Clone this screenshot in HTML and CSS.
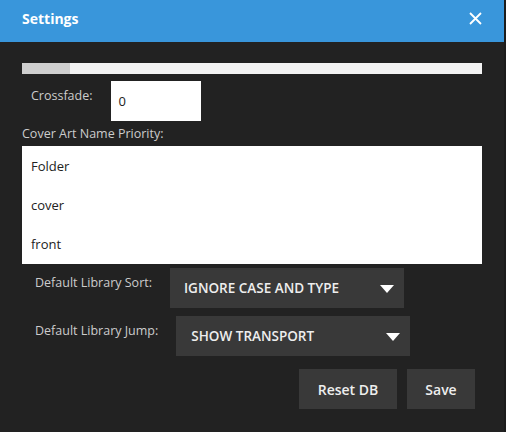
FILE: index.html
```html
<!DOCTYPE html>
<html>
<head>
<meta charset="utf-8">
<link rel="stylesheet" href="styles.css">
</head>
<body>
<div class="dialog">
  <div class="header">
    <span class="title">Settings</span>
    <svg class="close" width="13" height="13" viewBox="0 0 13 13"><path d="M1 1 L12 12 M12 1 L1 12" stroke="#fff" stroke-width="1.8" fill="none"/></svg>
  </div>
  <div class="body">
    <div class="progress"><div class="progress-fill"></div></div>
    <div class="row crossfade">
      <label class="lbl lbl-cross">Crossfade:</label>
      <div class="input">0</div>
    </div>
    <div class="lbl-cover">Cover Art Name Priority:</div>
    <div class="list">
      <div class="item">Folder</div>
      <div class="item">cover</div>
      <div class="item">front</div>
    </div>
    <div class="row sort">
      <label class="lbl lbl-sel">Default Library Sort:</label>
      <div class="select"><span>IGNORE CASE AND TYPE</span><i class="tri"></i></div>
    </div>
    <div class="row jump">
      <label class="lbl lbl-sel">Default Library Jump:</label>
      <div class="select"><span>SHOW TRANSPORT</span><i class="tri"></i></div>
    </div>
    <div class="buttons">
      <button class="btn btn-reset">Reset DB</button>
      <button class="btn btn-save">Save</button>
    </div>
  </div>
</div>
</body>
</html>
```
FILE: styles.css
```css
html, body {
  margin: 0;
  padding: 0;
  height: 100%;
  background: #1c1c1c;
  font-family: "Open Sans", "Liberation Sans", sans-serif;
}
.dialog {
  width: 504px;
  height: 432px;
  background: #222222;
  overflow: hidden;
}
.header {
  height: 42px;
  background: #3996db;
  display: flex;
  align-items: center;
  justify-content: space-between;
  padding: 0 22px;
  box-sizing: border-box;
}
.title {
  color: #fff;
  font-weight: 700;
  font-size: 14px;
  margin-top: -5px;
}
.close {
  margin-top: -6px;
}
.body {
  padding: 0 22px;
}
.progress {
  margin-top: 21px;
  height: 11px;
  background: #f3f3f3;
}
.progress-fill {
  width: 48px;
  height: 100%;
  background: #cfcfcf;
}
.row {
  display: flex;
  align-items: flex-start;
}
.crossfade {
  margin-top: 7px;
}
.lbl {
  color: #cccccc;
  font-size: 12.5px;
  line-height: 16px;
}
.lbl-cross {
  margin-left: 9px;
  margin-right: 18px;
  padding-top: 7px;
}
.input {
  width: 90px;
  height: 40px;
  background: #fff;
  color: #222;
  font-size: 13px;
  line-height: 40px;
  padding-left: 8px;
  box-sizing: border-box;
}
.lbl-cover {
  color: #cccccc;
  font-size: 12.5px;
  line-height: 16px;
  margin-top: 5px;
}
.list {
  margin-top: 4px;
  height: 118px;
  background: #fff;
  display: flex;
  flex-direction: column;
}
.item {
  flex: 1;
  display: flex;
  align-items: center;
  padding-left: 9px;
  color: #222;
  font-size: 13px;
}
.sort {
  margin-top: 4px;
}
.jump {
  margin-top: 8px;
}
.lbl-sel {
  margin-left: 13px;
  margin-right: 18px;
  padding-top: 7px;
}
.select {
  width: 234px;
  height: 40px;
  background: #393939;
  color: #eeeeee;
  font-size: 13.5px;
  font-weight: 600;
  display: flex;
  align-items: center;
  justify-content: space-between;
  padding: 0 10px 0 14px;
  box-sizing: border-box;
}
.jump .select {
  padding-left: 15px;
}
.tri {
  width: 0;
  height: 0;
  border-left: 7.5px solid transparent;
  border-right: 7.5px solid transparent;
  border-top: 8px solid #ffffff;
  margin-top: 2px;
}
.buttons {
  display: flex;
  justify-content: flex-end;
  gap: 10px;
  margin-top: 13px;
  margin-right: 7px;
}
.btn {
  height: 40px;
  background: #393939;
  color: #eeeeee;
  border: none;
  font-family: "Open Sans", "Liberation Sans", sans-serif;
  font-size: 14px;
  font-weight: 600;
  padding: 0;
}
.btn-reset {
  width: 98px;
}
.btn-save {
  width: 68px;
}
```
